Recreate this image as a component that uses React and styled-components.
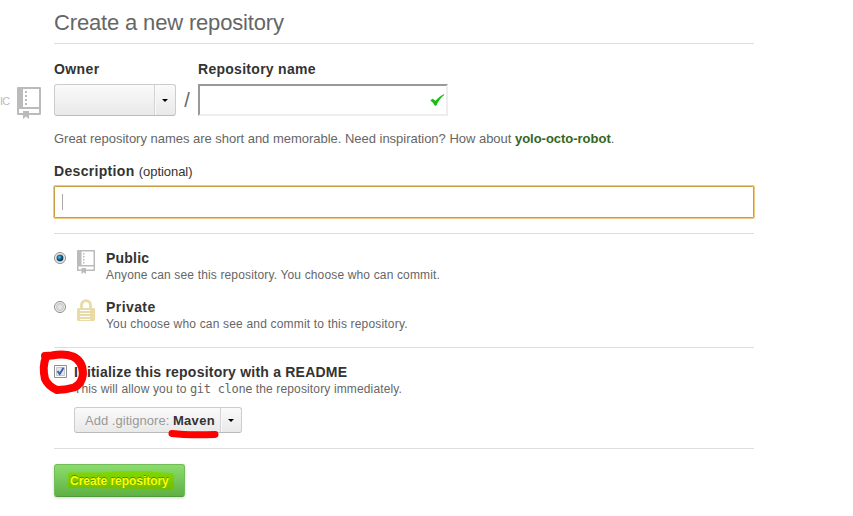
import React from "react";
import styled, { createGlobalStyle } from "styled-components";

const GlobalStyle = createGlobalStyle`
  body {
    margin: 0;
    background: #fff;
    overflow: hidden;
    font-family: "Liberation Sans", Arial, sans-serif;
    color: #333;
  }
  * { box-sizing: border-box; }
`;

const Page = styled.div`
  display: grid;
  grid-template-columns: 54px 700px;
  width: 853px;
  height: 516px;
  overflow: hidden;
`;

const Rail = styled.aside`
  display: flex;
  align-items: flex-start;
  padding-top: 87px;
`;

const RailLabel = styled.span`
  width: 17px;
  font-size: 11px;
  line-height: 28px;
  letter-spacing: -0.8px;
  color: #bbb;
`;

const Form = styled.form`
  display: flex;
  flex-direction: column;
  margin: 0;
`;

const Title = styled.h1`
  height: 44px;
  margin: 0;
  border-bottom: 1px solid #ddd;
  font-size: 22px;
  font-weight: normal;
  line-height: 45px;
  letter-spacing: -0.16px;
  color: #666;
  white-space: nowrap;
`;

const NameRow = styled.div`
  display: grid;
  grid-template-columns: 122px 22px 250px;
  grid-template-rows: 30px 32px;
  padding-top: 10px;
`;

const Label = styled.label`
  grid-column: ${(p) => p.$column || "auto"};
  font-size: 14px;
  font-weight: bold;
  line-height: 30px;
  letter-spacing: ${(p) => p.$spacing || 0}px;
  white-space: nowrap;
`;

const Optional = styled.span`
  font-size: 13px;
  font-weight: normal;
  letter-spacing: -0.05px;
`;

const SelectButton = styled.button`
  display: flex;
  align-items: stretch;
  justify-content: space-between;
  width: ${(p) => p.$width}px;
  height: ${(p) => p.$height}px;
  margin: ${(p) => p.$margin || 0};
  padding: 0;
  border: 1px solid #ccc;
  border-bottom-color: #bbb;
  border-radius: 3px;
  background: linear-gradient(#fafafa, #e9e9e9);
  font: 13px/25px "Liberation Sans", Arial, sans-serif;
  color: #999;
  white-space: nowrap;
`;

const SelectText = styled.span`
  padding-left: 10px;
  letter-spacing: ${(p) => p.$spacing || 0}px;
`;

const SelectValue = styled.strong`
  color: #333;
  letter-spacing: 0.3px;
`;

const Arrow = styled.span`
  display: flex;
  align-items: center;
  justify-content: center;
  width: 21px;
  padding-right: 1px;
  border-left: 1px solid #d2d2d2;
  box-shadow: inset 1px 0 #fafafa;

  &::after {
    content: "";
    border: 3px solid transparent;
    border-top-color: #000;
    border-bottom: 0;
  }
`;

const Slash = styled.span`
  font-size: 20px;
  line-height: 33px;
  text-align: center;
  color: #666;
`;

const NameField = styled.div`
  display: flex;
  align-items: center;
  justify-content: flex-end;
  padding-right: 1px;
  border: 2px solid;
  border-color: #999 #eee #eee #999;
`;

const Hint = styled.p`
  height: 45px;
  margin: 0;
  font-size: 13px;
  line-height: 46px;
  letter-spacing: -0.02px;
  color: #666;
  white-space: nowrap;

  strong { color: #336622; }
`;

const DescriptionLabel = styled(Label)`
  height: 25px;
  line-height: 20px;
`;

const DescriptionField = styled.div`
  display: flex;
  align-items: center;
  height: 32px;
  margin-bottom: 15px;
  padding-left: 7px;
  border: 1px solid #c99c45;
  border-radius: 1px;
  box-shadow: 0 0 0 1px #f0c980;
`;

const Caret = styled.span`
  width: 1px;
  height: 16px;
  background: #aaa;
`;

const Visibility = styled.fieldset`
  display: flex;
  flex-direction: column;
  height: 114px;
  margin: 0;
  padding: 15px 0 0;
  border: 0;
  border-top: 1px solid #ddd;
`;

const Choice = styled.div`
  display: grid;
  grid-template-columns: 23px 29px 1fr;
  height: 49px;
`;

const Control = styled.span`
  padding-top: ${(p) => p.$top || 0}px;
  line-height: 0;
`;

const Copy = styled.div`
  display: flex;
  flex-direction: column;
  white-space: nowrap;
`;

const Name = styled.strong`
  height: 18px;
  font-size: 14px;
  line-height: 18px;
  letter-spacing: ${(p) => p.$spacing || 0}px;
`;

const Note = styled.span`
  font-size: 12px;
  line-height: 17px;
  letter-spacing: ${(p) => p.$spacing || 0}px;
  color: #666;
`;

const Code = styled.code`
  font: 12px/17px "DejaVu Sans Mono", monospace;
  letter-spacing: -0.3px;
`;

const Initialize = styled.section`
  height: 101px;
  padding-top: 15px;
  border-top: 1px solid #ddd;
`;

const ReadmeRow = styled.div`
  display: grid;
  grid-template-columns: 20px 1fr;
  height: 44px;
`;

const Actions = styled.footer`
  padding-top: 15px;
  border-top: 1px solid #ddd;
`;

const CreateButton = styled.button`
  display: flex;
  align-items: center;
  width: 131px;
  height: 33px;
  padding: 0 0 0 13px;
  border: 1px solid #74bb5a;
  border-bottom-color: #509b38;
  border-radius: 3px;
  background: linear-gradient(#8add6d, #60b044);
  box-shadow: 0 1px 3px rgba(0, 0, 0, 0.18);
`;

const Highlight = styled.span`
  width: 106px;
  padding-left: 2px;
  background: linear-gradient(#82d900, #70bb00);
  clip-path: polygon(0 10%, 32% 10%, 53% 0, 75% 0, 79% 6%, 100% 14%, 100% 90%, 96% 100%, 86% 94%, 0 86%);
  font: bold 12px/20px "Liberation Sans", Arial, sans-serif;
  letter-spacing: -0.04px;
  text-align: left;
  color: #ff0;
  text-shadow: 0 -1px #4b8d00;
  white-space: nowrap;
`;

const Markup = styled.svg`
  position: absolute;
  left: 0;
  top: 0;
  pointer-events: none;
`;

function RepoIcon({ width, height }) {
  return (
    <svg width={width} height={height} viewBox="0 0 24 32" fill="#bbb">
      <path fillRule="evenodd" d="M1 0H23Q24 0 24 1V27Q24 28 23 28H12V32L9 29.5L6 32V28H1Q0 28 0 27V1Q0 0 1 0ZM6 2V20H22V2ZM2 22V26H6V24H12V26H22V22Z" />
      <path d="M8 4h2v2H8zM8 8h2v2H8zM8 12h2v2H8zM8 16h2v2H8z" />
    </svg>
  );
}

function LockIcon() {
  return (
    <svg width="18" height="23" viewBox="0 0 18 23">
      <path d="M4.5 10V6.5C4.5 0 13.5 0 13.5 6.5V10" fill="none" stroke="#e9dba5" strokeWidth="2.8" />
      <path d="M1 9H17L18 10V21L17 22H1L0 21V10Z" fill="#e9dba5" />
      <path d="M3 11.5H13M3 14.5H13M3 17.5H13M3 20.5H13" stroke="#fff" />
    </svg>
  );
}

function RadioIcon({ checked }) {
  return (
    <svg width="12" height="12" viewBox="0 0 12 12">
      <defs>
        <radialGradient id="radioFill">
          <stop offset="0" stopColor="#eee" />
          <stop offset="1" stopColor="#c8c8c8" />
        </radialGradient>
        <radialGradient id="radioDot" cx="40%" cy="38%">
          <stop offset="0" stopColor="#65d4f5" />
          <stop offset=".5" stopColor="#167bac" />
          <stop offset="1" stopColor="#123b58" />
        </radialGradient>
      </defs>
      <circle cx="6" cy="6" r="5.5" fill="#f6f6f6" stroke="#8b8b8b" />
      <circle cx="6" cy="6" r="4.2" fill="url(#radioFill)" />
      {checked && <circle cx="6" cy="6" r="3.3" fill="url(#radioDot)" />}
    </svg>
  );
}

function CheckboxIcon() {
  return (
    <svg width="13" height="13" viewBox="0 0 13 13">
      <path d="M.5.5H12.5V12.5H.5Z" fill="#fff" stroke="#8e8f8f" />
      <path d="M2.5 2.5H10.5V10.5H2.5Z" fill="#e3e6ea" stroke="#c4c8cc" />
      <path d="M3.5 6L5.7 9L9.5 2.7" fill="none" stroke="#405eaa" strokeWidth="1.9" />
    </svg>
  );
}

function ValidIcon() {
  return (
    <svg width="15" height="12" viewBox="0 0 15 12">
      <path d="M.3 6.2L2.7 4.8L5.4 6.8Q9 2.6 13.5 .2L14.4 .7Q9 5 6.3 11.7H5Q3 8.5 .3 6.2Z" fill="#18bd12" />
    </svg>
  );
}

export default function App() {
  return (
    <>
      <GlobalStyle />
      <Page>
        <Rail>
          <RailLabel>IC</RailLabel>
          <RepoIcon width={24} height={32} />
        </Rail>
        <Form>
          <Title>Create a new repository</Title>
          <NameRow>
            <Label $spacing={0.4}>Owner</Label>
            <Label $column={3} $spacing={0.28}>Repository name</Label>
            <SelectButton type="button" $width={122} $height={32}>
              <SelectText />
              <Arrow />
            </SelectButton>
            <Slash>/</Slash>
            <NameField><ValidIcon /></NameField>
          </NameRow>
          <Hint>
            Great repository names are short and memorable. Need inspiration? How about <strong>yolo-octo-robot</strong>.
          </Hint>
          <DescriptionLabel $spacing={0.32}>
            Description <Optional>(optional)</Optional>
          </DescriptionLabel>
          <DescriptionField><Caret /></DescriptionField>
          <Visibility>
            <Choice>
              <Control $top={3}><RadioIcon checked /></Control>
              <Control $top={1}><RepoIcon width={18} height={24} /></Control>
              <Copy>
                <Name $spacing={0.2}>Public</Name>
                <Note $spacing={0.15}>Anyone can see this repository. You choose who can commit.</Note>
              </Copy>
            </Choice>
            <Choice>
              <Control $top={3}><RadioIcon /></Control>
              <Control $top={1}><LockIcon /></Control>
              <Copy>
                <Name $spacing={0.42}>Private</Name>
                <Note $spacing={0.18}>You choose who can see and commit to this repository.</Note>
              </Copy>
            </Choice>
          </Visibility>
          <Initialize>
            <ReadmeRow>
              <Control $top={2}><CheckboxIcon /></Control>
              <Copy>
                <Name $spacing={0.22}>Initialize this repository with a README</Name>
                <Note $spacing={0.14}>This will allow you to <Code>git clone</Code> the repository immediately.</Note>
              </Copy>
            </ReadmeRow>
            <SelectButton type="button" $width={168} $height={26} $margin="0 0 0 20px">
              <SelectText $spacing={0.03}>Add .gitignore: <SelectValue>Maven</SelectValue></SelectText>
              <Arrow />
            </SelectButton>
          </Initialize>
          <Actions>
            <CreateButton type="button"><Highlight>Create repository</Highlight></CreateButton>
          </Actions>
        </Form>
      </Page>
      <Markup width="853" height="516" viewBox="0 0 853 516" fill="none" stroke="#f00" strokeLinecap="round" strokeLinejoin="round">
        <path d="M45 356L52 355.500Q64 353 73 356.500Q83 361 83 374Q82 384 74 387.500Q65 390 57 390Q48 386 45 379Q42 367 46 357" strokeWidth="8" />
        <path d="M172 433.500Q188 435.500 215 434.500" strokeWidth="7" />
      </Markup>
    </>
  );
}
